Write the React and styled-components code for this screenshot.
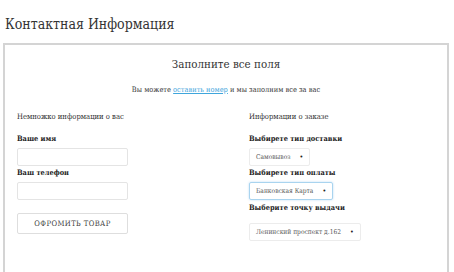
import React from "react";
import styled, { createGlobalStyle } from "styled-components";

const Global = createGlobalStyle`
  html, body { margin: 0; padding: 0; background: #fff; }
  body {
    font-family: "DejaVu Serif", "Liberation Serif", serif;
    font-stretch: condensed;
    color: #333;
  }
`;

const Page = styled.div`
  padding: 0 5px 0 3px;
`;

const Title = styled.h1`
  margin: 0;
  padding: 15px 0 0 2px;
  height: 28px;
  font-size: 14px;
  font-weight: normal;
  line-height: 18px;
  color: #333;
`;

const Panel = styled.div`
  border: 2px solid #d4d4d4;
  border-bottom: none;
  height: 240px;
`;

const Heading = styled.h2`
  margin: 0;
  padding-top: 12px;
  text-align: center;
  font-size: 11.5px;
  font-weight: normal;
  line-height: 14px;
`;

const Sub = styled.p`
  margin: 0;
  padding-top: 14px;
  text-align: center;
  font-size: 7.4px;
  line-height: 10px;
  a { color: #3fa6dc; text-decoration: underline; }
`;

const Columns = styled.div`
  display: grid;
  grid-template-columns: 232px 1fr;
  padding: 17px 0 0 12px;
`;

const Col = styled.div`
  display: flex;
  flex-direction: column;
  align-items: flex-start;
`;

const Section = styled.div`
  font-size: 7.6px;
  line-height: 10px;
  margin-bottom: 12px;
`;

const Label = styled.div`
  font-size: 7.4px;
  font-weight: bold;
  line-height: 10px;
  margin-bottom: 4px;
  color: #222;
`;

const Input = styled.div`
  box-sizing: border-box;
  width: 111px;
  height: 18px;
  border: 1px solid #e4e4e4;
  border-radius: 2px;
  margin-bottom: 2px;
`;

const Button = styled.div`
  box-sizing: border-box;
  width: 111px;
  height: 21px;
  margin-top: 11px;
  border: 1px solid #dedede;
  border-radius: 2px;
  display: flex;
  align-items: center;
  justify-content: center;
  font-size: 7.6px;
  letter-spacing: 0.4px;
  color: #444;
`;

const Select = styled.div`
  box-sizing: border-box;
  height: 18px;
  display: flex;
  align-items: center;
  gap: 9px;
  padding: 0 6px;
  border: 1px solid ${p => (p.$focus ? "#a9d4ef" : "#ececec")};
  box-shadow: ${p => (p.$focus ? "0 0 2px rgba(102,175,233,0.5)" : "none")};
  border-radius: 2px;
  font-size: 6.6px;
  color: #555;
  margin-bottom: ${p => p.$mb ?? 2}px;
  margin-top: ${p => p.$mt || 0}px;
`;

const Dot = styled.span`
  font-size: 7px;
  color: #222;
`;

export default function App() {
  return (
    <>
      <Global />
      <Page>
        <Title>Контактная Информация</Title>
        <Panel>
          <Heading>Заполните все поля</Heading>
          <Sub>
            Вы можете <a href="#">оставить номер</a> и мы заполним все за вас
          </Sub>
          <Columns>
            <Col>
              <Section>Немножко информации о вас</Section>
              <Label>Ваше имя</Label>
              <Input />
              <Label>Ваш телефон</Label>
              <Input />
              <Button>ОФРОМИТЬ ТОВАР</Button>
            </Col>
            <Col>
              <Section>Информации о заказе</Section>
              <Label>Выбирете тип доставки</Label>
              <Select>Самовывоз<Dot>•</Dot></Select>
              <Label>Выбирете тип оплаты</Label>
              <Select $focus $mb={3}>Банковская Карта<Dot>•</Dot></Select>
              <Label>Выберите точку выдачи</Label>
              <Select $mt={6}>Ленинский проспект д.162<Dot>•</Dot></Select>
            </Col>
          </Columns>
        </Panel>
      </Page>
    </>
  );
}
